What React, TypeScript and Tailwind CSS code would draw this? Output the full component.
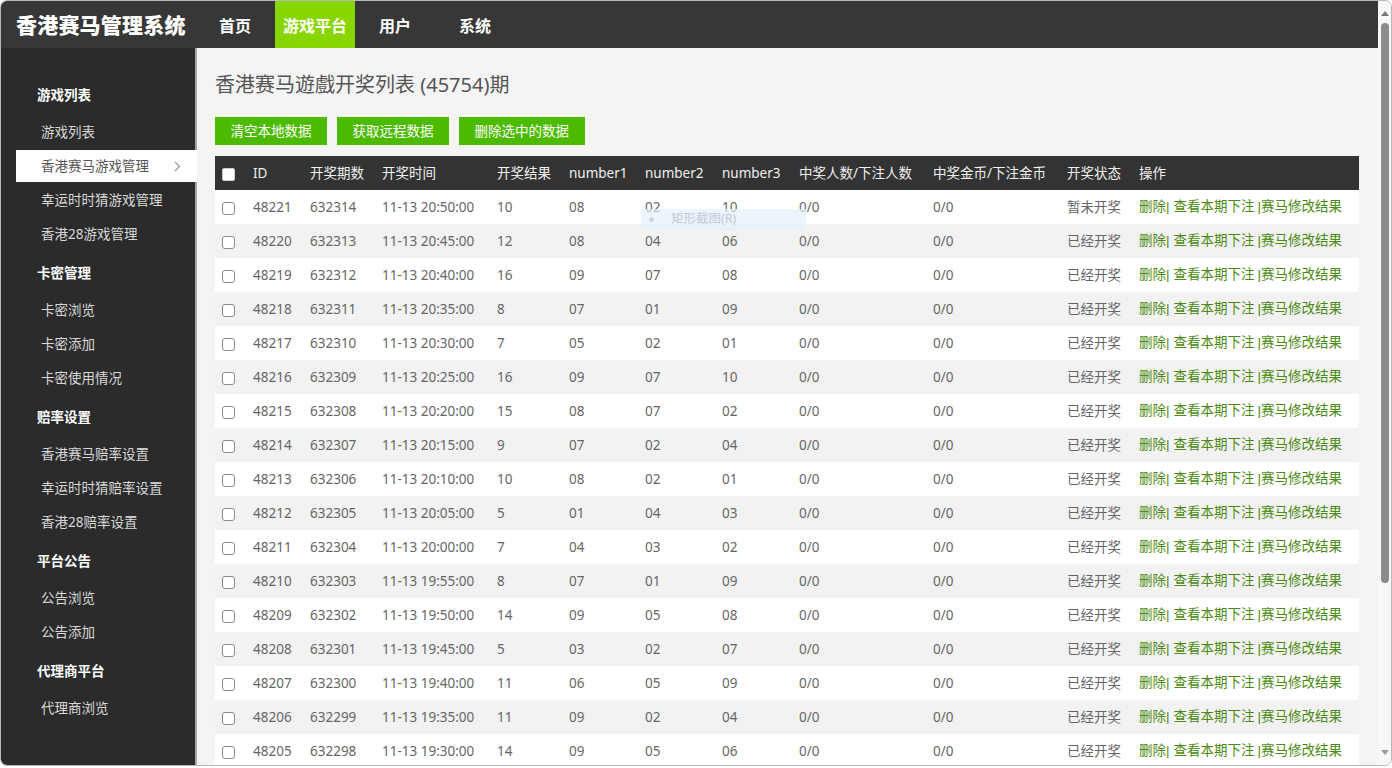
import React from "react";

const rows: [string, string, string, string, string, string, string, string][] = [
  ["48221", "632314", "11-13 20:50:00", "10", "08", "02", "10", "暂未开奖"],
  ["48220", "632313", "11-13 20:45:00", "12", "08", "04", "06", "已经开奖"],
  ["48219", "632312", "11-13 20:40:00", "16", "09", "07", "08", "已经开奖"],
  ["48218", "632311", "11-13 20:35:00", "8", "07", "01", "09", "已经开奖"],
  ["48217", "632310", "11-13 20:30:00", "7", "05", "02", "01", "已经开奖"],
  ["48216", "632309", "11-13 20:25:00", "16", "09", "07", "10", "已经开奖"],
  ["48215", "632308", "11-13 20:20:00", "15", "08", "07", "02", "已经开奖"],
  ["48214", "632307", "11-13 20:15:00", "9", "07", "02", "04", "已经开奖"],
  ["48213", "632306", "11-13 20:10:00", "10", "08", "02", "01", "已经开奖"],
  ["48212", "632305", "11-13 20:05:00", "5", "01", "04", "03", "已经开奖"],
  ["48211", "632304", "11-13 20:00:00", "7", "04", "03", "02", "已经开奖"],
  ["48210", "632303", "11-13 19:55:00", "8", "07", "01", "09", "已经开奖"],
  ["48209", "632302", "11-13 19:50:00", "14", "09", "05", "08", "已经开奖"],
  ["48208", "632301", "11-13 19:45:00", "5", "03", "02", "07", "已经开奖"],
  ["48207", "632300", "11-13 19:40:00", "11", "06", "05", "09", "已经开奖"],
  ["48206", "632299", "11-13 19:35:00", "11", "09", "02", "04", "已经开奖"],
  ["48205", "632298", "11-13 19:30:00", "14", "09", "05", "06", "已经开奖"],
];

const sections: { title: string; items: string[] }[] = [
  { title: "游戏列表", items: ["游戏列表", "香港赛马游戏管理", "幸运时时猜游戏管理", "香港28游戏管理"] },
  { title: "卡密管理", items: ["卡密浏览", "卡密添加", "卡密使用情况"] },
  { title: "赔率设置", items: ["香港赛马赔率设置", "幸运时时猜赔率设置", "香港28赔率设置"] },
  { title: "平台公告", items: ["公告浏览", "公告添加"] },
  { title: "代理商平台", items: ["代理商浏览"] },
];

const headers = ["ID", "开奖期数", "开奖时间", "开奖结果", "number1", "number2", "number3", "中奖人数/下注人数", "中奖金币/下注金币", "开奖状态", "操作"];
const widths = [30, 57, 72, 115, 72, 76, 77, 77, 134, 134, 72, 228];

function Sidebar() {
  return (
    <div className="w-[194px] shrink-0 bg-[#2b2b2b] pt-[30px] relative z-10">
      {sections.map((s) => (
        <div key={s.title} className="mb-[5px]">
          <div className="h-[34px] flex items-center pl-[36px] text-[13.5px] font-bold text-white">{s.title}</div>
          <div className="mt-[3px]">
            {s.items.map((it) => {
              const sel = it === "香港赛马游戏管理";
              return sel ? (
                <div key={it} className="h-[34px] flex items-center">
                  <div className="ml-[15px] mr-[-2px] h-[32px] flex-1 bg-white flex items-center pl-[25px] pr-[14px] text-[13.5px] text-[#555]">
                    <span className="flex-1">{it}</span>
                    <svg width="7" height="11" viewBox="0 0 7 11" className="mr-[2px]">
                      <path d="M1 1 L5.5 5.5 L1 10" fill="none" stroke="#999" strokeWidth="1.2" />
                    </svg>
                  </div>
                </div>
              ) : (
                <div key={it} className="h-[34px] flex items-center pl-[40px] text-[13.5px] text-[#d8d8d8]">{it}</div>
              );
            })}
          </div>
        </div>
      ))}
    </div>
  );
}

function Checkbox({ head }: { head?: boolean }) {
  return head ? (
    <span className="inline-block w-[13px] h-[13px] bg-white border border-[#cfcfcf] rounded-[2px] align-middle" />
  ) : (
    <span className="inline-block w-[13px] h-[13px] bg-white border border-[#8a8a8a] rounded-[3px] align-middle" />
  );
}

export default function App() {
  return (
    <div className="w-[1392px] h-[768px] bg-white font-['Noto_Sans','Noto_Sans_CJK_SC',sans-serif] overflow-hidden">
      <div className="h-[766px] flex rounded-[7px] border border-[#b8b8b8] overflow-hidden bg-[#f4f4f4]">
        <div className="flex-1 flex flex-col min-w-0">
          <div className="h-[47px] shrink-0 bg-[#373737] flex items-stretch">
            <div className="w-[194px] flex items-center pl-[15px] text-[21px] font-black text-white font-['Noto_Sans_CJK_SC',sans-serif] tracking-[0.2px]">
              香港赛马管理系统
            </div>
            {["首页", "游戏平台", "用户", "系统"].map((n) => (
              <div
                key={n}
                className={`w-[80px] flex items-center justify-center text-[16px] font-bold text-white font-['Noto_Sans_CJK_SC',sans-serif] ${n === "游戏平台" ? "bg-[#88d600]" : ""}`}
              >
                {n}
              </div>
            ))}
          </div>
          <div className="flex-1 flex min-h-0">
            <Sidebar />
            <div className="flex-1 min-w-0 border-l-[2px] border-[#a5a5a5] pl-[18px] pr-[19px] pt-[23px] relative overflow-hidden">
              <div className="h-[28px] flex items-center text-[20px] text-[#555]">香港赛马遊戲开奖列表 (45754)期</div>
              <div className="mt-[18px] flex gap-[10px]">
                {["清空本地数据", "获取远程数据", "删除选中的数据"].map((b) => (
                  <div key={b} className="h-[28px] px-[15.5px] bg-[#4cbb00] text-white text-[13.5px] flex items-center">{b}</div>
                ))}
              </div>
              <table className="mt-[11px] table-fixed border-collapse w-[1144px] text-[13.5px]">
                <colgroup>
                  {widths.map((w, i) => (
                    <col key={i} style={{ width: w }} />
                  ))}
                </colgroup>
                <thead>
                  <tr className="h-[34px] bg-[#333333] text-[#f0f0f0]">
                    <th className="text-left font-normal pl-[7px]"><Checkbox head /></th>
                    {headers.map((h) => (
                      <th key={h} className="text-left font-normal pl-[8px] whitespace-nowrap">{h}</th>
                    ))}
                  </tr>
                </thead>
                <tbody>
                  {rows.map((r, i) => (
                    <tr key={r[0]} className={`h-[34px] text-[#666] ${i % 2 === 0 ? "bg-white" : "bg-[#f2f2f2]"}`}>
                      <td className="pl-[7px]"><Checkbox /></td>
                      <td className="pl-[8px]">{r[0]}</td>
                      <td className="pl-[8px]">{r[1]}</td>
                      <td className="pl-[8px] whitespace-nowrap">{r[2]}</td>
                      <td className="pl-[8px]">{r[3]}</td>
                      <td className="pl-[8px]">{r[4]}</td>
                      <td className="pl-[8px]">{r[5]}</td>
                      <td className="pl-[8px]">{r[6]}</td>
                      <td className="pl-[8px]">0/0</td>
                      <td className="pl-[8px]">0/0</td>
                      <td className="pl-[8px] whitespace-nowrap">{r[7]}</td>
                      <td className="pl-[8px] whitespace-nowrap text-[#4a8a12]">
                        <span>删除</span>
                        <span className="font-['Liberation_Sans',sans-serif]">|</span>
                        <span className="ml-[4px]">查看本期下注</span>
                        <span className="ml-[3px] font-['Liberation_Sans',sans-serif]">|</span>
                        <span>赛马修改结果</span>
                      </td>
                    </tr>
                  ))}
                </tbody>
              </table>
              <div className="absolute left-[444px] top-[161px] w-[165px] h-[21px] bg-[#e4f0fb]/70 flex items-center pl-[8px] text-[12.5px] text-[#c2cad3]">
                <span className="w-[5px] h-[5px] rounded-full bg-[#d0d6dc] mr-[17px]" />
                矩形截图(R)
              </div>
            </div>
          </div>
        </div>
        <div className="w-[13px] shrink-0 bg-[#f7f7f7] flex flex-col items-center">
          <svg width="8" height="5" viewBox="0 0 8 5" className="mt-[10px]">
            <path d="M0 5 L4 0 L8 5 Z" fill="#7a7a7a" />
          </svg>
          <div className="mt-[7px] w-[8px] h-[560px] rounded-full bg-[#8c8c8c]" />
          <div className="flex-1" />
          <svg width="8" height="5" viewBox="0 0 8 5" className="mb-[10px]">
            <path d="M0 0 L8 0 L4 5 Z" fill="#9a9a9a" />
          </svg>
        </div>
      </div>
    </div>
  );
}
